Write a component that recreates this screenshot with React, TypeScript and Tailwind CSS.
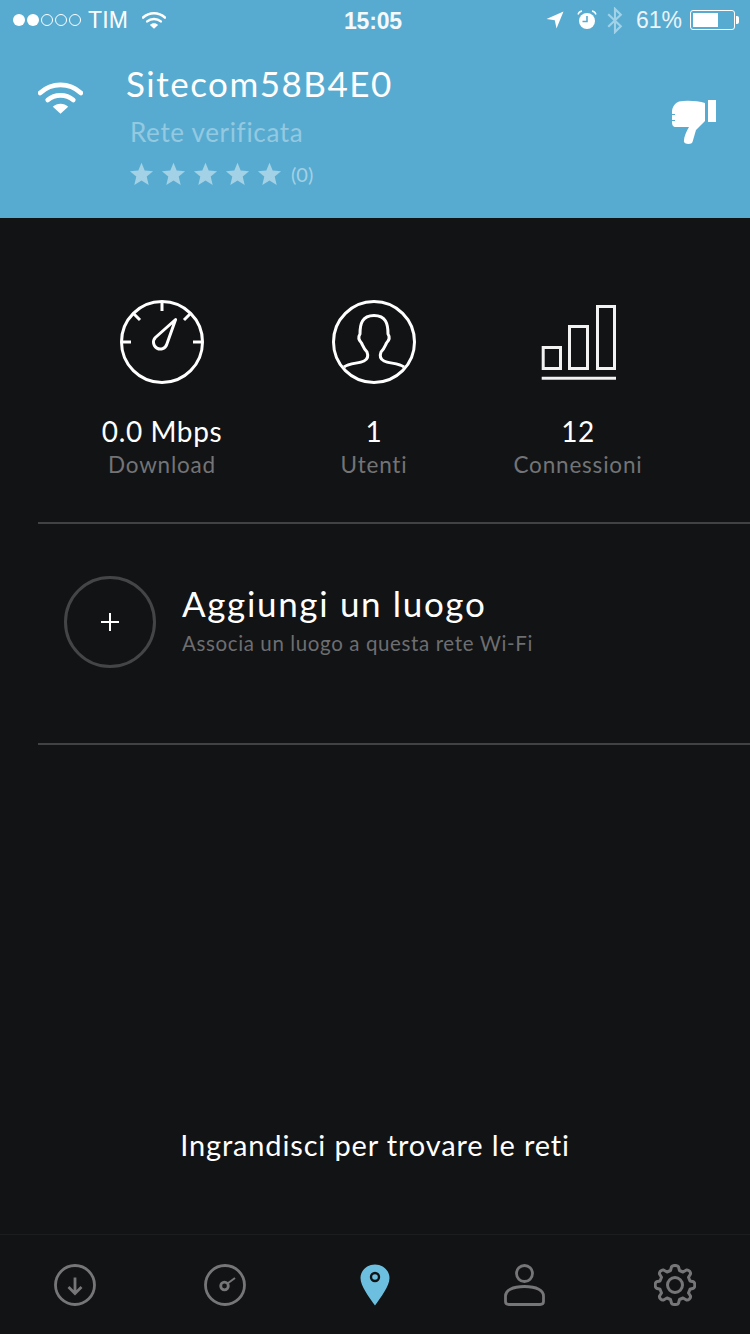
import React from "react";

const sans = "font-['Lato','Open_Sans',sans-serif]";

function WifiGlyph({ className }: { className: string }) {
  return (
    <svg viewBox="0 0 44 32" className={className} fill="none">
      <path d="M2 11.5C13.5 1 30.5 1 42 11.5" stroke="currentColor" strokeWidth="4.6" strokeLinecap="round" />
      <path d="M9.5 18.5C16.5 12.5 27.5 12.5 34.5 18.5" stroke="currentColor" strokeWidth="4.6" strokeLinecap="round" />
      <path d="M22 32L14.5 25C18.5 21.2 25.5 21.2 29.5 25Z" fill="currentColor" />
    </svg>
  );
}

function Star() {
  return (
    <svg viewBox="0 0 24 24" className="w-[25px] h-[24px] text-[#a3d1e5]" fill="currentColor">
      <path d="M12 0.8L15.2 8.6L23.6 9.2L17.2 14.6L19.2 22.9L12 18.5L4.8 22.9L6.8 14.6L0.4 9.2L8.8 8.6Z" />
    </svg>
  );
}

function StatusBar() {
  return (
    <div className="relative h-[40px] flex items-center justify-between pl-[13px] pr-[11px] text-white font-['Liberation_Sans',sans-serif] text-[23px]">
      <div className="flex items-center">
        <div className="flex items-center gap-[2px]">
          {[1, 1, 0, 0, 0].map((f, i) => (
            <span key={i} className={f ? "w-[12px] h-[12px] rounded-full bg-white" : "w-[12px] h-[12px] rounded-full border border-white"} />
          ))}
        </div>
        <span className="ml-[7px] leading-none tracking-[0.2px]">TIM</span>
        <WifiGlyph className="ml-[14px] w-[24px] h-[18px] text-white" />
      </div>
      <span className="absolute left-[344px] top-[9px] text-[23px] leading-[24px] font-bold text-[#f4f9fc] tracking-[-0.2px]">15:05</span>
      <div className="flex items-center">
        <svg viewBox="0 0 18 18" className="w-[18px] h-[18px]" fill="white">
          <path d="M17.5 0.5L10.5 17.5L8.8 9.2L0.5 8Z" />
        </svg>
        <svg viewBox="0 0 20 20" className="ml-[13px] w-[20px] h-[20px]" fill="none">
          <circle cx="10" cy="11" r="8" fill="white" />
          <path d="M10 6V11.5H5.5" stroke="#58abd0" strokeWidth="1.6" />
          <path d="M1 4.5C1.6 2.6 3 1.4 5 1M19 4.5C18.4 2.6 17 1.4 15 1" stroke="white" strokeWidth="1.4" />
        </svg>
        <svg viewBox="0 0 16 28" className="ml-[10px] w-[16px] h-[27px]" fill="none" stroke="#a3d1e5" strokeWidth="2.2">
          <path d="M1 7.5L14 20L8 26V2L14 8L1 20.5" />
        </svg>
        <span className="ml-[13px] leading-none text-[#eaf4f9]">61%</span>
        <div className="ml-[8px] w-[45px] h-[20px] rounded-[3px] border border-white p-[2px]">
          <div className="w-[25px] h-full bg-white" />
        </div>
        <span className="ml-[1px] w-[3px] h-[8px] bg-white rounded-r-[2px]" />
      </div>
    </div>
  );
}

function Gauge() {
  return (
    <svg viewBox="0 0 84 84" className="w-[84px] h-[84px]" fill="none" stroke="white" strokeWidth="3">
      <circle cx="42" cy="42" r="40.5" />
      <path d="M42 2V11M2 42H11M73 42H82M13.5 13.5L20 20M70.5 13.5L64 20" />
      <path d="M55.6 19.5L46.8 44.2A6.8 6.8 0 1 1 35.4 37.5Z" strokeLinejoin="round" />
    </svg>
  );
}

function UserCircle() {
  return (
    <svg viewBox="0 0 84 84" className="w-[84px] h-[84px]" fill="none" stroke="white" strokeWidth="3">
      <circle cx="42" cy="42" r="40.5" />
      <path
        d="M12 67C17 63 27 63.5 32 61C36 59 36.5 56 35 52C32 49 31 46 29.5 43C26 39.5 26 37 28 34C28 24 30 15.5 42 15.5C54 15.5 56 24 56 34C58 37 58 39.5 54.5 43C53 46 52 49 49 52C47.5 56 48 59 52 61C57 63.5 67 63 72 67"
        strokeLinejoin="round"
      />
    </svg>
  );
}

function Bars() {
  return (
    <svg viewBox="0 -1 76 76" className="w-[76px] h-[76px]" fill="none" stroke="#f2f2f2" strokeWidth="3">
      <rect x="3.2" y="42.5" width="17.3" height="21" />
      <rect x="29.5" y="21.5" width="18" height="42" />
      <rect x="57.5" y="1.5" width="17" height="62" />
      <path d="M1.7 73.3H76" />
    </svg>
  );
}

function Stat({ icon, value, label, className }: { icon: React.ReactNode; value: string; label: string; className: string }) {
  return (
    <div className={`w-[160px] flex flex-col items-center ${className}`}>
      <div className="h-[84px] flex items-center justify-center">{icon}</div>
      <div className="mt-[30px] text-[28px] leading-[34px] text-white tracking-[0.6px]">{value}</div>
      <div className="mt-[2px] text-[22.5px] leading-[30px] text-[#737476] tracking-[0.8px]">{label}</div>
    </div>
  );
}

function Tab({ children }: { children: React.ReactNode }) {
  return <div className="w-[150px] flex items-center justify-center">{children}</div>;
}

export default function App() {
  return (
    <div className={`w-[750px] h-[1334px] flex flex-col bg-[#121315] overflow-hidden ${sans}`}>
      <header className="h-[218px] bg-[#58abd0] shrink-0">
        <StatusBar />
        <div className="flex">
          <WifiGlyph className="ml-[38px] mt-[41px] w-[45px] h-[33px] text-white" />
          <div className="ml-[44px] flex flex-col items-start">
            <div className="mt-[23px] ml-[-1px] text-[35px] leading-[40px] text-white tracking-[1.5px]">Sitecom58B4E0</div>
            <div className="ml-[3px] mt-[14px] text-[26px] leading-[30px] text-[#93c9e1] tracking-[0.67px]">Rete verificata</div>
            <div className="ml-[2px] mt-[15px] flex items-center gap-[7px]">
              <Star />
              <Star />
              <Star />
              <Star />
              <Star />
              <span className="ml-[2px] text-[20px] leading-[24px] text-[#a3d1e5]">(0)</span>
            </div>
          </div>
          <svg viewBox="0 0 44 44" className="ml-auto mr-[34px] mt-[60px] w-[44px] h-[44px]" fill="white">
            <path d="M36 -1H44V22H36Z" />
            <path d="M7 1.5C15 0 26 1 33 3V21L24 30L20.5 42C20 44.5 13 44.5 12 42C11.5 38 14 32 17 27H4C1 27 0 25 0 22V12C0 7 3 3 7 1.5Z" />
            <path d="M0 14.5H3M0 20.5H3" stroke="#58abd0" strokeWidth="1" />
          </svg>
        </div>
      </header>

      <main className="flex-1 flex flex-col">
        <div className="flex pt-[82px] h-[304px] ml-[82px]">
          <Stat icon={<Gauge />} value="0.0 Mbps" label="Download" className="" />
          <Stat icon={<UserCircle />} value="1" label="Utenti" className="ml-[52px]" />
          <Stat icon={<Bars />} value="12" label="Connessioni" className="ml-[44px]" />
        </div>
        <div className="ml-[38px] h-[2px] bg-[#414244]" />
        <div className="h-[219px] flex pl-[64px] pt-[52px]">
          <div className="w-[92px] h-[92px] rounded-full border-[3px] border-[#444547] flex items-center justify-center">
            <svg viewBox="0 0 20 20" className="w-[20px] h-[20px]" stroke="white" strokeWidth="2">
              <path d="M10 1V19M1 10H19" />
            </svg>
          </div>
          <div className="ml-[26px]">
            <div className="text-[35px] leading-[44px] text-white tracking-[1.65px] mt-[5px]">Aggiungi un luogo</div>
            <div className="text-[20.5px] leading-[30px] text-[#6d6e70] tracking-[0.62px] mt-[3px]">Associa un luogo a questa rete Wi-Fi</div>
          </div>
        </div>
        <div className="ml-[38px] h-[2px] bg-[#414244]" />
        <div className="flex-1 flex justify-center items-end pb-[71px]">
          <span className="text-[29px] leading-[36px] text-white tracking-[0.85px]">Ingrandisci per trovare le reti</span>
        </div>
      </main>

      <nav className="h-[100px] shrink-0 border-t border-[#1c1d1f] flex items-center text-[#767678]">
        <Tab>
          <svg viewBox="0 0 42 42" className="w-[42px] h-[42px]" fill="none" stroke="currentColor" strokeWidth="2.8">
            <circle cx="21" cy="21" r="19.5" />
            <path d="M21 13.5V29.5M14.5 23L21 29.5L27.5 23" />
          </svg>
        </Tab>
        <Tab>
          <svg viewBox="0 0 42 42" className="w-[42px] h-[42px]" fill="none" stroke="currentColor" strokeWidth="2.8">
            <circle cx="21" cy="21" r="19.5" />
            <circle cx="20.5" cy="22" r="3.8" />
            <path d="M23.5 19.5L31 14" strokeWidth="2" />
          </svg>
        </Tab>
        <Tab>
          <svg viewBox="0 0 30 42" className="w-[30px] h-[42px]" fill="none">
            <path d="M15 0.5C7 0.5 0.5 6.5 0.5 14C0.5 22 9 33 15 41.5C21 33 29.5 22 29.5 14C29.5 6.5 23 0.5 15 0.5Z" fill="#6dbfe0" />
            <circle cx="15" cy="13" r="4" stroke="#121315" strokeWidth="2.4" />
          </svg>
        </Tab>
        <Tab>
          <svg viewBox="0 0 42 42" className="w-[42px] h-[42px]" fill="none" stroke="currentColor" strokeWidth="2.8">
            <circle cx="20.5" cy="9.5" r="8" />
            <path d="M5 40.5H36C38 40.5 39.5 39.5 39.5 37.5V32C39.5 26.5 33 22.5 20.5 22.5C8 22.5 1.5 26.5 1.5 32V37.5C1.5 39.5 3 40.5 5 40.5Z" strokeLinejoin="round" />
          </svg>
        </Tab>
        <Tab>
          <svg viewBox="0 0 42 42" className="w-[42px] h-[42px]" fill="none" stroke="currentColor" strokeWidth="3" strokeLinejoin="round">
            <circle cx="21" cy="21" r="7.5" />
            <path d="M17.5 2.8C18.5 1 23.5 1 24.5 2.8L25.5 6.5L29 8L32.5 6C34.5 5.5 37 8 36.5 10L34.5 13.2L36 17L39.5 17.8C41.3 18.8 41.3 23.2 39.5 24.2L36 25.2L34.5 29L36.5 32C37 34 34.5 36.5 32.5 36L29 34L25.5 35.5L24.5 39.2C23.5 41 18.5 41 17.5 39.2L16.5 35.5L13 34L9.5 36C7.5 36.5 5 34 5.5 32L7.5 29L6 25.2L2.5 24.2C0.7 23.2 0.7 18.8 2.5 17.8L6 17L7.5 13.2L5.5 10C5 8 7.5 5.5 9.5 6L13 8L16.5 6.5Z" />
          </svg>
        </Tab>
      </nav>
    </div>
  );
}
